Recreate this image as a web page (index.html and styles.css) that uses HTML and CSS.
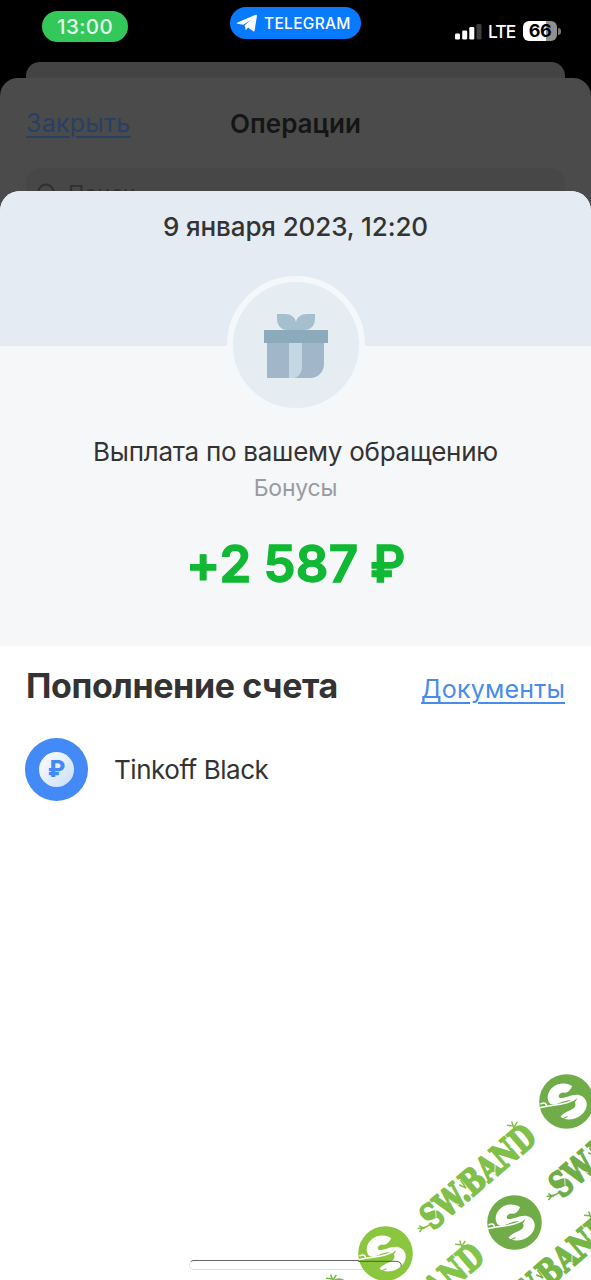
FILE: index.html
```html
<!DOCTYPE html>
<html lang="ru">
<head>
<meta charset="utf-8">
<title>Операции</title>
<link rel="stylesheet" href="styles.css">
</head>
<body>
<div class="phone">
  <header class="status">
    <span class="clock">13:00</span>
    <span class="app-pill">
      <svg width="22" height="18" viewBox="0 0 22 18"><path d="M1 8.800 19.500.800c1-.4 1.600.1 1.400 1.200L18.700 16.200c-.2 1.200-1 1.500-1.900.9L12 13.600l-2.200 2.600-1.200-5 6.400-5.200L7.200 10.700 1.600 9.800C.8 9.600.4 9.100 1 8.800Z" fill="#fff"/></svg>
      TELEGRAM
    </span>
    <span class="indicators">
      <svg width="27" height="17" viewBox="0 0 27 17"><g fill="#fff"><rect x="0" y="10.500" width="5" height="6" rx="1.300"/><rect x="7.200" y="7.500" width="5" height="9" rx="1.300"/><rect x="14.300" y="4" width="5" height="12.500" rx="1.300"/></g><rect x="21.500" y="1" width="5" height="15.500" rx="1.300" fill="#3d3d3d"/></svg>
      <span class="network">LTE</span>
      <span class="battery">66</span>
      <span class="battery-tip"></span>
    </span>
  </header>
  <div class="back-card"></div>
  <section class="operations">
    <nav class="operations-bar"><a class="close">Закрыть</a><span class="operations-title">Операции</span></nav>
    <div class="search">
      <svg width="20" height="20" viewBox="0 0 20 20" fill="none" stroke="#303030" stroke-width="2"><circle cx="9" cy="9" r="7.500"/><path d="m14.500 14.500 5 5"/></svg>
      <span>Поиск</span>
    </div>
  </section>
  <main class="sheet">
    <div class="date">9 января 2023, 12:20</div>
    <section class="summary">
      <div class="gift">
        <svg width="64" height="64" viewBox="0 0 64 64">
          <path d="M13 0h8c6 0 10 3 11 8 1-5 5-8 11-8h8v5c0 6-4 11-10 11H23C17 16 13 11 13 5Z" fill="#a6bfcf"/>
          <path d="M3 29h57v21c0 8-6 14-14 14H3Z" fill="#a1b7c9"/>
          <path d="M25 29h13v23c0 7-4 12-9 12h-4Z" fill="#c4d8e3"/>
          <path d="M0 16h64v13H0Z" fill="#8babbd"/>
        </svg>
      </div>
      <h1 class="payment">Выплата по вашему обращению</h1>
      <p class="category">Бонусы</p>
      <p class="amount"><span>+2</span><span>587</span><span class="currency">₽</span></p>
    </section>
    <section class="details">
      <div class="details-head"><h2 class="details-title">Пополнение счета</h2><a class="documents">Документы</a></div>
      <div class="account"><span class="account-icon"><span class="coin">₽</span></span><span class="account-name">Tinkoff Black</span></div>
    </section>
  </main>
  <div class="home-bar"></div>
  <svg class="watermark" width="591" height="1280" viewBox="0 0 591 1280">
    <defs>
      <g id="word">
        <g transform="translate(433 1231) rotate(-40.6)">
          <text class="band" x="0" y="0" textLength="139" lengthAdjust="spacingAndGlyphs" transform="scale(1 1.080)">SW.BAND</text>
          <path d="M4-7Q-3-6-10-12m4 3-5 1m6 1-2-6M128-24l3-8m-2 4-4-4m4 6 6-2M50-18l3 7 1-10" fill="none" stroke="currentColor" stroke-width="1.500"/>
          <path d="M17-16 11-8M37-3l-6-9M85-4l8-9M113-14l7 11" stroke="#fff" stroke-width=".7"/>
        </g>
      </g>
      <g id="badge">
        <circle r="27.300" fill="currentColor"/>
        <path d="M5.700-15.300C1-19-8-19-13.500-14.500-19-10-21-2-16 2.500-11 5-7 0 1-1 6-2 9 0 9 3c0 6-9 5-15 12 3 4 14 4 20-1C22 8 22-1 16-5 9-10 0-3-6-3.500-9-4-8-8-4-9 0-8 3-10 5.700-15.300Z" fill="#fff"/>
        <path d="M-27 6.500C-14 4 3 5 11-4 9 3 1 7-7 7-14 8-20 7-27 6.500Z" fill="currentColor"/>
        <path d="M-27 6.300C-15 3 2 4 10-4M-26 2.500q6-3 6 3" fill="none" stroke="#fff" stroke-width="1.500"/>
        <path d="m-5 18 6-3" stroke="currentColor" stroke-width="1.200"/>
      </g>
    </defs>
    <g color="#76b646">
      <use href="#word" color="#80bf49"/>
      <use href="#word" x="129" y="-32" color="#70ad48"/>
      <use href="#word" x="-52" y="119" color="#83c44a"/>
      <use href="#word" x="77" y="90"/>
      <use href="#word" x="-181" y="153"/>
      <use href="#badge" x="566.500" y="1101.500" color="#70ad48"/>
      <use href="#badge" x="514.500" y="1222.500" color="#70ad48"/>
      <use href="#badge" x="385.500" y="1253.500" color="#8bc63f"/>
    </g>
    <path d="M358 1261.300h38q6 .5 5 5" fill="none" stroke="#466524" stroke-width="1"/>
  </svg>
</div>
</body>
</html>
```
FILE: styles.css
```css
* { box-sizing: border-box; }
body { margin: 0; background: #000; font-family: Inter, "Liberation Sans", sans-serif; color: #333; }
.phone { position: relative; width: 591px; height: 1280px; overflow: hidden; background: #000; display: flex; flex-direction: column; }
h1, h2, p { margin: 0; font-weight: 400; }
.status { height: 62px; display: grid; grid-template-columns: 230px 131px 1fr; align-items: start; color: #fff; flex: none; }
.clock { margin: 11px 0 0 42px; width: 86px; height: 31px; border-radius: 16px; background: #34c759; color: #e5f8e9; font-size: 20.5px; font-weight: 500; letter-spacing: .4px; line-height: 31px; text-align: center; }
.app-pill { margin-top: 7px; height: 32px; border-radius: 16px; background: #087aff; display: flex; align-items: center; gap: 6px; padding-left: 6px; font-size: 15.5px; font-weight: 500; letter-spacing: .3px; }
.indicators { display: flex; align-items: center; margin: 21px 0 0 94px; height: 20px; }
.network { font-size: 17.5px; letter-spacing: -.9px; margin-left: 6px; width: 27px; font-weight: 500; }
.battery { margin-left: 8px; width: 34px; height: 20px; border-radius: 6px; background: linear-gradient(90deg, #fff 67%, #909090 67%); color: #000; font-size: 18px; font-weight: 700; letter-spacing: -.5px; line-height: 20px; text-align: center; }
.battery-tip { margin-left: 1px; width: 3px; height: 7px; border-radius: 0 3px 3px 0; background: #777; }
.back-card { height: 30px; margin: 0 26px -14px; border-radius: 14px 14px 0 0; background: #444; flex: none; }
.operations { height: 129px; margin-bottom: -16px; border-radius: 18px 18px 0 0; background: #4b4b4b; flex: none; overflow: hidden; }
.operations-bar { height: 90px; padding: 0 26px; display: grid; grid-template-columns: 1fr auto 1fr; align-items: center; }
.close { color: #293f63; font-size: 25px; letter-spacing: .25px; text-decoration: underline; text-decoration-thickness: 1.5px; text-underline-offset: 4px; }
.operations-title { color: #151515; font-size: 26px; font-weight: 600; }
.search { margin: 0 26px; height: 50px; border-radius: 15px; background: #474747; display: flex; align-items: center; gap: 11px; padding-left: 11px; color: #303030; font-size: 22px; }
.sheet { flex: 1; border-radius: 20px 20px 0 0; background: #fff; overflow: hidden; }
.date { height: 155px; padding-top: 20px; background: #e4ebf2; text-align: center; font-size: 26px; line-height: 32px; font-weight: 500; letter-spacing: -.12px; }
.summary { height: 300px; background: #f5f7f9; display: flex; flex-direction: column; align-items: center; }
.gift { width: 138px; height: 138px; margin-top: -70px; border: 6px solid #f5f8fb; border-radius: 50%; background: #e5ecf2; display: flex; align-items: center; justify-content: center; padding-top: 2px; flex: none; }
.payment { margin-top: 22px; font-size: 26px; line-height: 32px; letter-spacing: -.27px; white-space: nowrap; }
.category { margin-top: 6px; font-size: 23px; line-height: 28px; letter-spacing: -.2px; color: #999ba0; }
.amount { margin-top: 32px; display: flex; gap: 12px; font-size: 51px; line-height: 60px; font-weight: 600; letter-spacing: .3px; color: #10b834; -webkit-text-stroke: 1.3px #10b834; stroke-linejoin: round; white-space: nowrap; }
.currency { transform: scaleX(.95); transform-origin: left; margin-right: -3px; }
.details { padding: 15px 26px 0; }
.details-head { display: flex; justify-content: space-between; align-items: baseline; height: 50px; line-height: 50px; }
.details-title { font-size: 34px; font-weight: 700; letter-spacing: -.4px; }
.documents { font-size: 25px; letter-spacing: .2px; color: #478ceb; text-decoration: underline; text-decoration-thickness: 1.5px; text-underline-offset: 4px; }
.account { margin-top: 27px; display: flex; align-items: center; gap: 26px; }
.account-icon { width: 63px; height: 63px; margin-left: -1px; border-radius: 50%; background: #438af7; display: flex; align-items: center; justify-content: center; }
.coin { width: 35px; height: 35px; border-radius: 50%; background: linear-gradient(135deg, #fff, #c8dcf5); color: #438af7; font-size: 23px; line-height: 35px; font-weight: 800; text-align: center; }
.account-name { font-size: 26px; letter-spacing: -.45px; }
.watermark { position: absolute; left: 0; top: 0; }
.band { font-family: "DejaVu Serif Condensed", "DejaVu Serif", serif; font-size: 32px; font-weight: 700; fill: currentColor; stroke: currentColor; stroke-width: 1.7px; }
.home-bar { position: absolute; left: 189px; top: 1260px; width: 213px; height: 10px; border: 1px solid #ddd; border-top: 1.5px solid #666; border-radius: 5px; }
```
